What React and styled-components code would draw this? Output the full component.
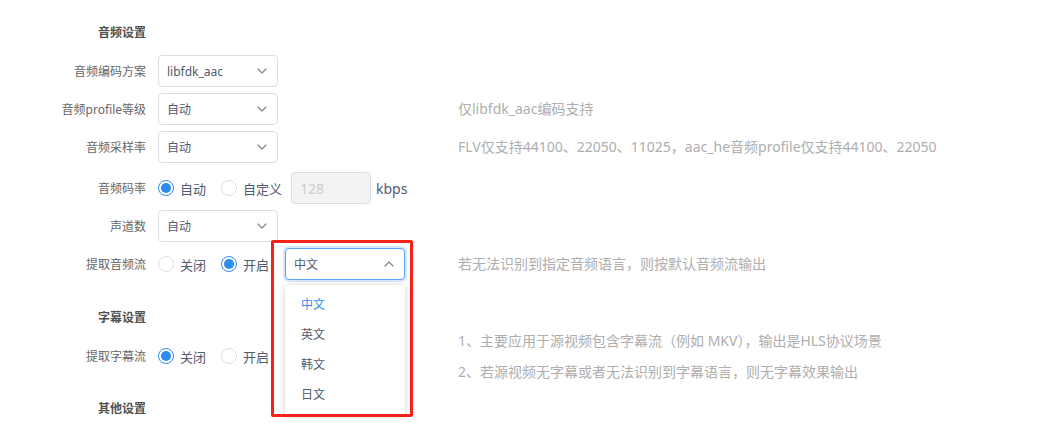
import React from "react";
import styled, { createGlobalStyle } from "styled-components";

const Global = createGlobalStyle`
  html, body { margin: 0; padding: 0; background: #fff; }
  body { font-family: "Noto Sans", "Noto Sans CJK SC", sans-serif; }
  * { box-sizing: border-box; }
`;

const Page = styled.div`
  width: 1048px;
  height: 428px;
  overflow: hidden;
  padding: 23px 0 0 46px;
  background: #fff;
`;

const SectionTitle = styled.div`
  width: 100px;
  height: 20px;
  line-height: 20px;
  text-align: right;
  font-size: 12px;
  font-weight: 700;
  color: #505050;
  margin-top: ${(p) => p.$mt || 0}px;
  margin-bottom: 12px;
`;

const Row = styled.div`
  display: grid;
  grid-template-columns: 100px 288px 1fr;
  column-gap: 12px;
  align-items: center;
  height: 32px;
  margin-top: ${(p) => (p.$mt != null ? p.$mt : 6)}px;
`;

const Label = styled.div`
  text-align: right;
  font-size: 12px;
  color: #666;
  white-space: nowrap;
`;

const Control = styled.div`
  display: flex;
  align-items: center;
  height: 32px;
`;

const Hint = styled.div`
  font-size: 14px;
  color: #aeaeae;
  white-space: nowrap;
  line-height: ${(p) => p.$lh || 20}px;
  margin: ${(p) => (p.$lh ? `-${(p.$lh * 2 - 32) / 2}px 0` : 0)};
`;

const SelectBox = styled.div`
  position: relative;
  width: 120px;
  height: 32px;
  border: 1px solid ${(p) => (p.$open ? "#57a3f3" : "#dcdee2")};
  box-shadow: ${(p) => (p.$open ? "0 0 0 2px rgba(45,140,240,.2)" : "none")};
  border-radius: 4px;
  background: #fff;
  display: flex;
  align-items: center;
  justify-content: space-between;
  padding: 0 10px 0 8px;
  font-size: 12px;
  color: #515a6e;
`;

const Chevron = ({ up }) => (
  <svg width="10" height="6" viewBox="0 0 10 6">
    <polyline
      points={up ? "1,5 5,1 9,5" : "1,1 5,5 9,1"}
      fill="none"
      stroke="#808695"
      strokeWidth="1.2"
      strokeLinecap="round"
      strokeLinejoin="round"
    />
  </svg>
);

const Select = ({ value, open }) => (
  <SelectBox $open={open}>
    <span>{value}</span>
    <Chevron up={open} />
  </SelectBox>
);

const RadioItem = styled.label`
  display: inline-flex;
  align-items: center;
  gap: 6px;
  font-size: 13px;
  color: #515a6e;
  margin-right: ${(p) => p.$mr ?? 15}px;
  white-space: nowrap;
`;

const Circle = styled.span`
  position: relative;
  width: 16px;
  height: 16px;
  border-radius: 50%;
  border: 1px solid ${(p) => (p.$on ? "#2d8cf0" : "#dcdee2")};
  background: #fff;
  &::after {
    content: "";
    display: ${(p) => (p.$on ? "block" : "none")};
    position: absolute;
    left: 2px;
    top: 2px;
    width: 10px;
    height: 10px;
    border-radius: 50%;
    background: #2d8cf0;
  }
`;

const Radio = ({ on, children, mr }) => (
  <RadioItem $mr={mr}>
    <Circle $on={on} />
    {children}
  </RadioItem>
);

const NumInput = styled.div`
  width: 80px;
  height: 32px;
  border: 1px solid #dcdee2;
  border-radius: 4px;
  background: #f3f3f3;
  color: #ccc;
  font-size: 14px;
  display: flex;
  align-items: center;
  padding-left: 8px;
`;

const Unit = styled.span`
  margin-left: 5px;
  font-size: 14px;
  color: #515a6e;
`;

const DropWrap = styled.div`
  position: relative;
  width: 120px;
  height: 32px;
`;

const Menu = styled.ul`
  position: absolute;
  top: 37px;
  left: 0;
  width: 120px;
  margin: 0;
  padding: 5px 0;
  list-style: none;
  background: #fff;
  border-radius: 4px;
  box-shadow: 0 1px 6px rgba(0, 0, 0, 0.2);
  z-index: 2;
`;

const MenuItem = styled.li`
  height: 30px;
  line-height: 30px;
  padding-left: 16px;
  font-size: 12px;
  color: ${(p) => (p.$active ? "#2d8cf0" : "#515a6e")};
`;

const Annotation = styled.div`
  position: absolute;
  left: -14px;
  top: -8px;
  width: 142px;
  height: 177px;
  border: 3px solid #f5221b;
  border-radius: 2px;
  z-index: 3;
  pointer-events: none;
`;

export default function App() {
  return (
    <Page>
      <Global />
      <SectionTitle>音频设置</SectionTitle>
      <Row $mt={0}>
        <Label>音频编码方案</Label>
        <Control>
          <Select value="libfdk_aac" />
        </Control>
      </Row>
      <Row>
        <Label>音频profile等级</Label>
        <Control>
          <Select value="自动" />
        </Control>
        <Hint>仅libfdk_aac编码支持</Hint>
      </Row>
      <Row>
        <Label>音频采样率</Label>
        <Control>
          <Select value="自动" />
        </Control>
        <Hint>FLV仅支持44100、22050、11025，aac_he音频profile仅支持44100、22050</Hint>
      </Row>
      <Row $mt={9}>
        <Label>音频码率</Label>
        <Control>
          <Radio on>自动</Radio>
          <Radio mr={9}>自定义</Radio>
          <NumInput>128</NumInput>
          <Unit>kbps</Unit>
        </Control>
      </Row>
      <Row>
        <Label>声道数</Label>
        <Control>
          <Select value="自动" />
        </Control>
      </Row>
      <Row>
        <Label>提取音频流</Label>
        <Control>
          <Radio>关闭</Radio>
          <Radio on mr={16}>开启</Radio>
          <DropWrap>
            <Select value="中文" open />
            <Menu>
              <MenuItem $active>中文</MenuItem>
              <MenuItem>英文</MenuItem>
              <MenuItem>韩文</MenuItem>
              <MenuItem>日文</MenuItem>
            </Menu>
            <Annotation />
          </DropWrap>
        </Control>
        <Hint>若无法识别到指定音频语言，则按默认音频流输出</Hint>
      </Row>

      <SectionTitle $mt={28}>字幕设置</SectionTitle>
      <Row $mt={0}>
        <Label>提取字幕流</Label>
        <Control>
          <Radio on>关闭</Radio>
          <Radio>开启</Radio>
        </Control>
        <Hint $lh={31}>
          1、主要应用于源视频包含字幕流（例如 MKV），输出是HLS协议场景
          <br />
          2、若源视频无字幕或者无法识别到字幕语言，则无字幕效果输出
        </Hint>
      </Row>

      <SectionTitle $mt={27}>其他设置</SectionTitle>
    </Page>
  );
}
